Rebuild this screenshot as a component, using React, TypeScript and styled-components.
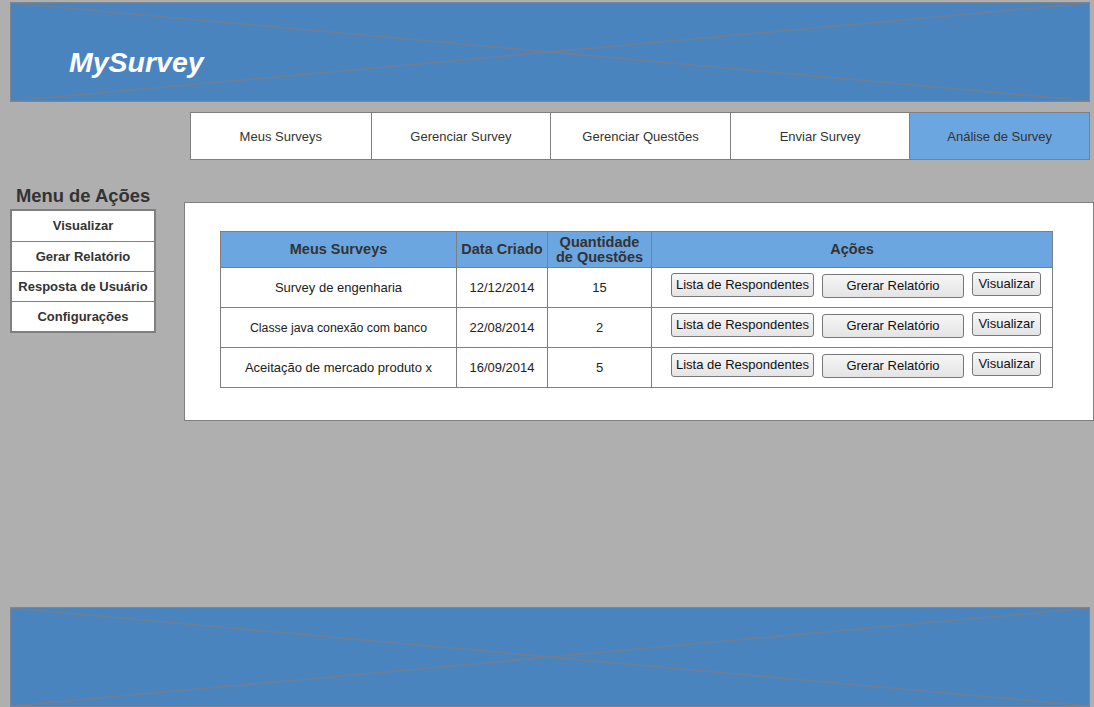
import React from "react";
import styled, { createGlobalStyle } from "styled-components";

const Global = createGlobalStyle`
  html, body { margin: 0; padding: 0; background: #afafaf; }
  body { font-family: "Liberation Sans", Arial, sans-serif; }
  * { box-sizing: border-box; }
`;

const Page = styled.div`
  width: 1094px;
  min-height: 707px;
  display: flex;
  flex-direction: column;
  padding-top: 2px;
  overflow: hidden;
`;

const Banner = styled.div`
  position: relative;
  margin: 0 4px 0 10px;
  height: 100px;
  background: #4a84bf;
  border: 1px solid #7b8694;
  display: flex;
  align-items: center;
  flex-shrink: 0;
`;

const Cross = styled.svg`
  position: absolute;
  inset: 0;
  width: 100%;
  height: 100%;
`;

const Title = styled.h1`
  position: relative;
  margin: 21px 0 0 58px;
  font-family: "Liberation Sans", Arial, sans-serif;
  font-size: 28.5px;
  font-weight: bold;
  font-style: italic;
  color: #ffffff;
`;

const Tabs = styled.nav`
  margin: 10px 4px 0 190px;
  height: 48px;
  display: grid;
  grid-template-columns: repeat(5, 1fr);
  border: 1px solid #7f7f7f;
  background: #ffffff;
`;

const Tab = styled.div<{ $active?: boolean }>`
  display: flex;
  align-items: center;
  justify-content: center;
  font-size: 13px;
  color: #333;
  background: ${(p) => (p.$active ? "#6ba6e1" : "#ffffff")};
  & + & { border-left: 1px solid #7f7f7f; }
`;

const Main = styled.div`
  display: flex;
  align-items: flex-start;
  padding-left: 10px;
`;

const Sidebar = styled.aside`
  width: 146px;
  margin-top: 25px;
  flex-shrink: 0;
`;

const SideTitle = styled.h2`
  margin: 0 0 3px 6px;
  font-size: 18.4px;
  line-height: 21px;
  font-weight: bold;
  color: #333;
  white-space: nowrap;
`;

const Menu = styled.ul`
  list-style: none;
  margin: 0;
  padding: 0;
  border: 2px solid #7f7f7f;
  background: #fff;
`;

const MenuItem = styled.li`
  height: 30px;
  display: flex;
  align-items: center;
  justify-content: center;
  padding-bottom: 1px;
  font-size: 13px;
  font-weight: bold;
  color: #333;
  white-space: nowrap;
  & + & { border-top: 1px solid #7f7f7f; }
`;

const Panel = styled.section`
  flex: 1;
  margin: 42px 0 0 28px;
  height: 219px;
  background: #fff;
  border: 1px solid #7f7f7f;
  padding: 28px 0 0 35px;
`;

const Table = styled.table`
  width: 832px;
  border-collapse: collapse;
  table-layout: fixed;
  font-family: "Liberation Sans", Arial, sans-serif;
`;

const Th = styled.th<{ $w: number }>`
  width: ${(p) => p.$w}px;
  height: 36px;
  background: #6ba6e1;
  border: 1px solid #7f7f7f;
  font-size: 14.5px;
  font-weight: bold;
  color: #333;
  line-height: 15px;
  padding: 0;
`;

const Td = styled.td<{ $small?: boolean }>`
  height: 40px;
  border: 1px solid #7f7f7f;
  text-align: center;
  font-size: ${(p) => (p.$small ? "12.3px" : "13px")};
  color: #222;
  padding: 0;
`;

const Actions = styled.div`
  display: flex;
  align-items: center;
  padding-left: 19px;
  gap: 8px;
`;

const Btn = styled.button<{ $w: number; $dy?: number }>`
  width: ${(p) => p.$w}px;
  height: 24px;
  transform: translateY(${(p) => p.$dy ?? 0}px);
  padding: 0;
  font-family: "Liberation Sans", Arial, sans-serif;
  font-size: 13px;
  color: #111;
  background: linear-gradient(#f6f6f6, #e4e4e4);
  border: 1px solid #777;
  border-radius: 3px;
`;

const Footer = styled.footer`
  position: relative;
  margin: auto 4px 0 10px;
  height: 100px;
  background: #4a84bf;
  border: 1px solid #7b8694;
  flex-shrink: 0;
`;

const XLines = () => (
  <Cross viewBox="0 0 1080 100" preserveAspectRatio="none">
    <line x1="0" y1="0" x2="1080" y2="100" stroke="#6f7f93" strokeWidth="1.5" vectorEffect="non-scaling-stroke" />
    <line x1="0" y1="100" x2="1080" y2="0" stroke="#6f7f93" strokeWidth="1.5" vectorEffect="non-scaling-stroke" />
  </Cross>
);

const rows = [
  { name: "Survey de engenharia", date: "12/12/2014", q: "15" },
  { name: "Classe java conexão com banco", date: "22/08/2014", q: "2", small: true },
  { name: "Aceitação de mercado produto x", date: "16/09/2014", q: "5" },
];

export default function App() {
  return (
    <Page>
      <Global />
      <Banner>
        <XLines />
        <Title>MySurvey</Title>
      </Banner>
      <Tabs>
        <Tab>Meus Surveys</Tab>
        <Tab>Gerenciar Survey</Tab>
        <Tab>Gerenciar Questões</Tab>
        <Tab>Enviar Survey</Tab>
        <Tab $active>Análise de Survey</Tab>
      </Tabs>
      <Main>
        <Sidebar>
          <SideTitle>Menu de Ações</SideTitle>
          <Menu>
            <MenuItem>Visualizar</MenuItem>
            <MenuItem>Gerar Relatório</MenuItem>
            <MenuItem>Resposta de Usuário</MenuItem>
            <MenuItem>Configurações</MenuItem>
          </Menu>
        </Sidebar>
        <Panel>
          <Table>
            <thead>
              <tr>
                <Th $w={236}>Meus Surveys</Th>
                <Th $w={91}>Data Criado</Th>
                <Th $w={104}>Quantidade<br />de Questões</Th>
                <Th $w={401}>Ações</Th>
              </tr>
            </thead>
            <tbody>
              {rows.map((r) => (
                <tr key={r.name}>
                  <Td $small={r.small}>{r.name}</Td>
                  <Td>{r.date}</Td>
                  <Td>{r.q}</Td>
                  <Td>
                    <Actions>
                      <Btn $w={143} $dy={-3}>Lista de Respondentes</Btn>
                      <Btn $w={142} $dy={-2}>Grerar Relatório</Btn>
                      <Btn $w={69} $dy={-4}>Visualizar</Btn>
                    </Actions>
                  </Td>
                </tr>
              ))}
            </tbody>
          </Table>
        </Panel>
      </Main>
      <Footer>
        <XLines />
      </Footer>
    </Page>
  );
}
